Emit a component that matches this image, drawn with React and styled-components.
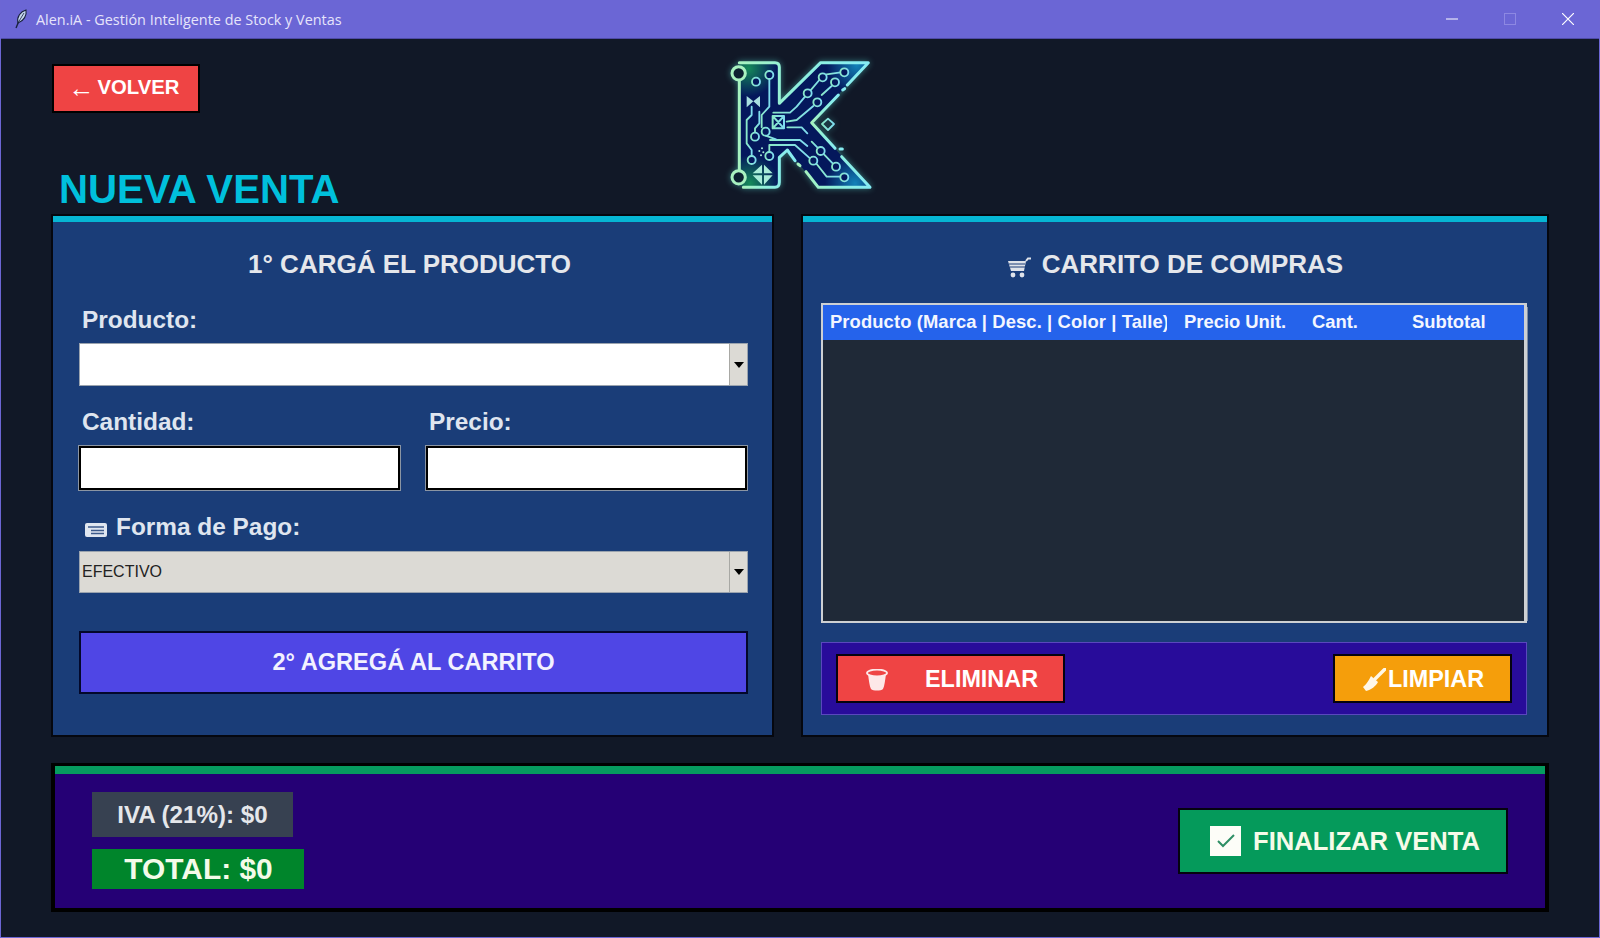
import React from "react";
import styled, { createGlobalStyle } from "styled-components";

const Global = createGlobalStyle`
  html, body { margin: 0; padding: 0; background: #111827; }
  * { box-sizing: border-box; }
  body { font-family: "Liberation Sans", Arial, sans-serif; }
`;

const Win = styled.div`
  width: 1600px; height: 938px; display: flex; flex-direction: column; overflow: hidden;
  background: #111827;
  border: 1px solid #6c66d4; border-top: 0;
`;
const TitleBar = styled.div`
  height: 39px; flex: none; margin: 0 -1px; background: #6b66d5; display: flex; align-items: center;
  padding: 0 3px 0 14px; border-bottom: 1px solid #4f4ba6;
  font-family: "Open Sans", sans-serif; font-size: 14.4px; color: #e6e4fb;
`;
const TitleText = styled.span` margin-left: 8px; flex: 1; `;
const WinControl = styled.span`
  width: 58px; height: 38px; display: flex; align-items: center; justify-content: center;
`;
const Content = styled.div` flex: 1; padding: 0 50px; display: flex; flex-direction: column; `;
const Header = styled.header` height: 175px; display: flex; flex: none; `;
const HeaderLeft = styled.div` width: 679px; padding-top: 25px; padding-left: 1px; `;
const BackButton = styled.button`
  display: flex; align-items: center; justify-content: center; gap: 3px; width: 148px; height: 49px;
  background: #ef4444; color: #fff; border: 2px solid #000; padding: 0 4px 2px 0; font: bold 20.3px "Liberation Sans", sans-serif;
`;
const BackArrow = styled.span` font: 400 26px/1 "Liberation Sans", sans-serif; `;
const PageTitle = styled.h1`
  margin: 54px 0 0 7px; font: bold 40.2px/46px "Liberation Sans", sans-serif; color: #00c0dc;
`;
const LogoSvg = styled.svg`
  width: 200px; height: 180px; margin: 1px 0 0 -30px;
  filter: drop-shadow(0 0 3px rgba(90, 230, 220, .45)) blur(.55px);
`;
const Panels = styled.div` display: grid; grid-template-columns: 723px 748px; column-gap: 27px; height: 523px; flex: none; `;
const Panel = styled.section`
  border: 2px solid #05070f; background: #1a3d78; padding: 0 ${(p) => p.$padR}px 0 ${(p) => p.$padL}px; display: flex; flex-direction: column;
  &::before { content: ""; display: block; flex: none; height: 6px; background: #06b6d4; margin: 0 -${(p) => p.$padR}px 0 -${(p) => p.$padL}px; }
`;
const PanelTitle = styled.h2`
  margin: 27px 0 0; height: 30px; display: flex; align-items: center; justify-content: center; gap: ${(p) => p.$gap || 0}px;
  padding: 0 ${(p) => p.$shiftR || 0}px 0 ${(p) => p.$shiftL || 0}px; font: bold 26px/30px "Liberation Sans", sans-serif; color: #e5e7eb;
`;
const Label = styled.label`
  display: flex; align-items: center; gap: 8px; height: 28px; margin-top: ${(p) => p.$top}px; padding-left: ${(p) => p.$left ?? 3}px;
  font: bold 24.4px/28px "Liberation Sans", sans-serif; color: #dfe5ef;
`;
const Combo = styled.div`
  height: ${(p) => p.$h}px; margin-top: ${(p) => p.$top}px; display: flex; border: 1px solid #9aa3ae;
  background: ${(p) => p.$bg}; color: #222; font: 16px "Liberation Sans", sans-serif; align-items: stretch;
`;
const ComboText = styled.span` flex: 1; display: flex; align-items: center; padding-left: 2px; `;
const ComboArrow = styled.span`
  width: 18px; background: #dcdad5; border-left: 1px solid #a8a8a4; display: flex; align-items: center; justify-content: center;
  &::after { content: ""; border: 5px solid transparent; border-top: 6px solid #000; border-bottom: 0; }
`;
const Row = styled.div` display: grid; grid-template-columns: 321px 321px; column-gap: 26px; `;
const Input = styled.div`
  height: 44px; margin-top: 10px; background: #fff; border: 2px solid #000; outline: 1px solid #8b95a3;
`;
const AddButton = styled.button`
  height: 63px; margin-top: 38px; background: #4f46e5; border: 2px solid #03082a; color: #f2f2ff;
  font: bold 23.6px "Liberation Sans", sans-serif; padding: 0 0 1px;
`;
const Tree = styled.div`
  height: 320px; margin-top: 24px; background: #1f2937; border: 2px solid #cdd0d3; border-right-width: 3px;
  position: relative;
  &::after { content: ""; position: absolute; right: -4px; top: 2px; bottom: 0; width: 1px; background: #7f8ea4; }
`;
const TreeHead = styled.div`
  height: 35px; padding-bottom: 2px; background: #2563eb; display: grid; grid-template-columns: 344px 145px 100px 1fr; align-items: center;
  color: #f3f6ff; font: bold 18.4px "Liberation Sans", sans-serif; white-space: nowrap;
`;
const TreeCell = styled.span` padding-left: ${(p) => p.$pad || 0}px; overflow: hidden; letter-spacing: ${(p) => p.$track || 0}px; `;
const Actions = styled.div`
  height: 73px; margin-top: 19px; background: #280c9a; border: 1px solid #5a48bd; display: flex; justify-content: space-between;
  align-items: center; padding: 0 14px;
`;
const ActionButton = styled.button`
  height: 49px; width: ${(p) => p.$w}px; background: ${(p) => p.$bg}; border: 2px solid #05030f; color: #fff; padding: 2px 0 0 ${(p) => p.$pad}px;
  display: flex; align-items: center; gap: ${(p) => p.$gap}px; font: bold 23.4px "Liberation Sans", sans-serif;
`;
const Summary = styled.section`
  height: 149px; margin-top: 26px; flex: none; border: 4px solid #000; background: #250075; display: flex; justify-content: space-between;
  position: relative; border-top-width: 3px;
  &::before { content: ""; position: absolute; left: 0; right: 0; top: 0; height: 8px; background: #069b5f; }
`;
const Totals = styled.div` padding: 26px 0 0 37px; display: flex; flex-direction: column; align-items: flex-start; gap: 12px; `;
const IvaBox = styled.div`
  width: 201px; height: 45px; background: #374151; color: #e5e7eb; display: flex; align-items: center; justify-content: center;
  font: bold 24.2px "Liberation Sans", sans-serif;
`;
const TotalBox = styled.div`
  width: 212px; height: 40px; background: #00852b; color: #f4fbe9; display: flex; align-items: center; justify-content: center;
  font: bold 29.9px "Liberation Sans", sans-serif; padding-left: 1px;
`;
const FinishButton = styled.button`
  width: 330px; height: 66px; margin: 42px 37px 0 0; background: #059a5b; border: 2px solid #05030f; color: #f5fbe9; padding: 0 0 0 30px;
  display: flex; align-items: center; gap: 12px; font: bold 25.6px "Liberation Sans", sans-serif;
`;
const CheckBox = styled.span`
  width: 31px; height: 30px; background: #fdfdf8; display: flex; align-items: center; justify-content: center;
`;

const Feather = () => (
  <svg width="14" height="20" viewBox="0 0 14 20">
    <path d="M2 19 L4.5 13" stroke="#1a2340" strokeWidth="1.4" fill="none" />
    <path d="M4 14 C2.5 8 6.5 2.5 12 1 C13 6 10 12 4 14Z" fill="#c4d6ee" stroke="#18213d" strokeWidth="1.1" />
    <path d="M4.5 13 L10 4" stroke="#18213d" strokeWidth=".8" />
  </svg>
);

const CIRCLES = [[168,125],[208,105],[197,275],[165,290],[155,360],[208,348],[323,160],[368,112],[433,97],[405,127],[352,187],[362,333],[408,380],[433,412],[340,362]];
const TRACES = [
  "M168 137V165","M208 117V200L185 225V262","M155 200V225L140 240V310L155 330V349","M178 215V250L165 265V279",
  "M209 275H262","M262 262H305L322 280","M220 218H270L290 200L315 170","M260 245L290 240L340 198","M380 103L422 97",
  "M331 152L358 120","M365 165L395 138","M235 290H245M252 290H262","M210 300H300L322 318","M208 337V315H285L330 355",
  "M350 372L380 410H422","M335 305L352 322","M372 343L398 370","M228 298L197 287",
];

const Logo = () => (
  <LogoSvg viewBox="0 0 600 540">
    <defs>
      <linearGradient id="edge" x1="0" x2="1" y1="0" y2="0">
        <stop offset="0" stopColor="#a6f2bf" /><stop offset=".45" stopColor="#8ff0dd" /><stop offset="1" stopColor="#86ecf4" />
      </linearGradient>
      <linearGradient id="trace" x1="0" x2="1" y1="0" y2="0">
        <stop offset="0" stopColor="#8ae8c8" /><stop offset="1" stopColor="#7fdcf0" />
      </linearGradient>
      <radialGradient id="g1" cx=".5" cy=".5" r=".5"><stop offset="0" stopColor="#158a5a" /><stop offset="1" stopColor="#158a5a" stopOpacity="0" /></radialGradient>
      <radialGradient id="g2" cx=".5" cy=".5" r=".5"><stop offset="0" stopColor="#1282b8" /><stop offset="1" stopColor="#1282b8" stopOpacity="0" /></radialGradient>
      <clipPath id="kclip"><path d="M118 68H225Q238 68 238 80V190L362 68H505L335 248L510 442H355L262 330L238 350V427Q238 442 225 442H130L118 432Z" /></clipPath>
    </defs>
    <path d="M118 68H225Q238 68 238 80V190L362 68H505L335 248L510 442H355L262 330L238 350V427Q238 442 225 442H130L118 432Z" fill="#04185c" />
    <g clipPath="url(#kclip)">
      <circle cx="145" cy="85" r="85" fill="url(#g1)" />
      <circle cx="150" cy="430" r="85" fill="url(#g1)" />
      <circle cx="470" cy="75" r="90" fill="url(#g2)" />
      <circle cx="465" cy="430" r="90" fill="url(#g2)" />
    </g>
    <g fill="none" stroke="url(#edge)" strokeWidth="9" strokeLinejoin="round" strokeLinecap="round">
      <path d="M118 420V90M118 68H225Q238 68 238 82V190L362 68H505L442 135" />
      <path d="M428 150L434 146M420 327H427M300 377L294 372" />
      <path d="M415 165L335 248L405 325" />
      <path d="M425 350L510 442H355L318 395" />
      <path d="M285 362L262 330L238 352V427Q238 442 225 442H130" />
    </g>
    <g fill="none" stroke="url(#trace)" strokeWidth="5.5" strokeLinecap="round" strokeLinejoin="round">
      {TRACES.map((d) => <path key={d} d={d} />)}
      {CIRCLES.map(([cx, cy]) => <circle key={cx + "-" + cy} cx={cx} cy={cy} r="12" fill="#04185c" />)}
      <path d="M218 228H252V265H218ZM218 228L252 265M252 228L218 265" strokeWidth="6" />
      <path d="M366 252L384 236L402 252L384 270Z" />
    </g>
    <path d="M140 168L160 184L180 168V202L160 184L140 202Z" fill="#a9dfe0" />
    <g fill="#a8ecd8">
      <path d="M186 374V400H158ZM192 374V400H218ZM186 406V434L158 406ZM192 406V434L218 406Z" />
      <circle cx="186" cy="325" r="3" /><circle cx="178" cy="333" r="3" /><circle cx="190" cy="337" r="3" /><circle cx="183" cy="346" r="3" />
    </g>
    <circle cx="116" cy="100" r="20" fill="#0c2030" stroke="#a8f2c0" strokeWidth="9" />
    <circle cx="116" cy="412" r="20" fill="#0c2030" stroke="#a8f2c0" strokeWidth="9" />
  </LogoSvg>
);

const CardIcon = () => (
  <svg width="24" height="16" viewBox="0 0 24 16" style={{ marginTop: 6 }}>
    <rect x="1" y="1" width="22" height="14" rx="2" fill="#dfe6f0" />
    <path d="M4 5H20M7 8.5H20M7 11.5H20" stroke="#3c5a8a" strokeWidth="1.3" />
  </svg>
);
const CartIcon = () => (
  <svg width="24" height="21" viewBox="0 0 24 21" style={{ marginTop: 6 }}>
    <path d="M1 4H19L17 14H4Z" fill="#dfe3ea" />
    <path d="M2 7H18M3 10H18" stroke="#1a3d78" strokeWidth="1.2" />
    <path d="M19 4L21 1.5H24" stroke="#dfe3ea" strokeWidth="2" fill="none" />
    <circle cx="6" cy="18" r="2.4" fill="#dfe3ea" /><circle cx="15" cy="18" r="2.4" fill="#dfe3ea" />
  </svg>
);
const TrashIcon = () => (
  <svg width="22" height="22" viewBox="0 0 22 22">
    <ellipse cx="11" cy="4" rx="10" ry="3.4" fill="none" stroke="#fde8e8" strokeWidth="1.8" />
    <path d="M2 5C3 12 3.5 17 5 20C7 22 15 22 17 20C18.5 17 19 12 20 5C16 8 6 8 2 5Z" fill="#fde8e8" />
  </svg>
);
const BroomIcon = () => (
  <svg width="24" height="24" viewBox="0 0 24 24">
    <path d="M23 1L13 11" stroke="#fff7e8" strokeWidth="3.4" strokeLinecap="round" />
    <path d="M9 8L16 14C14 18 9 22 4 23L1 19C4 17 7 12 9 8Z" fill="#fff7e8" />
  </svg>
);

export default function App() {
  return (
    <>
      <Global />
      <Win>
        <TitleBar>
          <Feather />
          <TitleText>Alen.iA - Gestión Inteligente de Stock y Ventas</TitleText>
          <WinControl>
            <svg width="12" height="12" viewBox="0 0 12 12"><path d="M0 6H12" stroke="#fff" strokeWidth="1" /></svg>
          </WinControl>
          <WinControl>
            <svg width="12" height="12" viewBox="0 0 12 12"><rect x=".5" y=".5" width="11" height="11" fill="none" stroke="#8d88e2" /></svg>
          </WinControl>
          <WinControl>
            <svg width="12" height="12" viewBox="0 0 12 12"><path d="M0 0L12 12M12 0L0 12" stroke="#fff" strokeWidth="1.2" /></svg>
          </WinControl>
        </TitleBar>
        <Content>
          <Header>
            <HeaderLeft>
              <BackButton><BackArrow>←</BackArrow>VOLVER</BackButton>
              <PageTitle>NUEVA VENTA</PageTitle>
            </HeaderLeft>
            <Logo />
          </Header>
          <Panels>
            <Panel $padL={26} $padR={24}>
              <PanelTitle $shiftR={8}>1° CARGÁ EL PRODUCTO</PanelTitle>
              <Label $top={27}>Producto:</Label>
              <Combo $h={43} $top={9} $bg="#fff"><ComboText /><ComboArrow /></Combo>
              <Row>
                <div>
                  <Label $top={22}>Cantidad:</Label>
                  <Input />
                </div>
                <div>
                  <Label $top={22}>Precio:</Label>
                  <Input />
                </div>
              </Row>
              <Label $top={23} $left={5}><CardIcon />Forma de Pago:</Label>
              <Combo $h={42} $top={10} $bg="#dcdad5"><ComboText>EFECTIVO</ComboText><ComboArrow /></Combo>
              <AddButton>2° AGREGÁ AL CARRITO</AddButton>
            </Panel>
            <Panel $padL={18} $padR={20}>
              <PanelTitle $gap={11} $shiftL={2}><CartIcon />CARRITO DE COMPRAS</PanelTitle>
              <Tree>
                <TreeHead>
                  <TreeCell $pad={7} $track={0.1}>Producto (Marca | Desc. | Color | Talle)</TreeCell>
                  <TreeCell $pad={17}>Precio Unit.</TreeCell>
                  <TreeCell>Cant.</TreeCell>
                  <TreeCell>Subtotal</TreeCell>
                </TreeHead>
              </Tree>
              <Actions>
                <ActionButton $w={229} $bg="#ef4444" $pad={28} $gap={37}><TrashIcon />ELIMINAR</ActionButton>
                <ActionButton $w={179} $bg="#f59e0b" $pad={27} $gap={2}><BroomIcon />LIMPIAR</ActionButton>
              </Actions>
            </Panel>
          </Panels>
          <Summary>
            <Totals>
              <IvaBox>IVA (21%): $0</IvaBox>
              <TotalBox>TOTAL: $0</TotalBox>
            </Totals>
            <FinishButton>
              <CheckBox>
                <svg width="18" height="14" viewBox="0 0 18 14"><path d="M1 7L6 12L17 1" fill="none" stroke="#2e8f66" strokeWidth="2" /></svg>
              </CheckBox>
              FINALIZAR VENTA
            </FinishButton>
          </Summary>
        </Content>
      </Win>
    </>
  );
}
